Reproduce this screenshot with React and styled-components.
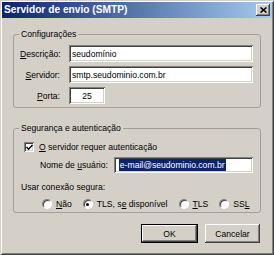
import React from "react";
import styled, { createGlobalStyle } from "styled-components";

const GlobalStyle = createGlobalStyle`
  html, body { margin: 0; padding: 0; background: #d4d0c8; }
  body { font-family: "Liberation Sans", Arial, sans-serif; font-size: 8.6px; color: #000; }
  * { box-sizing: border-box; }
`;

const Window = styled.div`
  width: 274px;
  height: 255px;
  background: #d4d0c8;
  padding: 2px;
  display: flex;
  flex-direction: column;
  box-shadow: inset 1px 1px 0 #d4d0c8, inset -1px -1px 0 #404040,
    inset 2px 2px 0 #ffffff, inset -2px -2px 0 #808080;
`;

const TitleBar = styled.div`
  height: 16px;
  display: flex;
  align-items: center;
  justify-content: space-between;
  padding: 0 2px 0 2px;
  background: linear-gradient(to right, #0a246a, #a6caf0);
`;

const Title = styled.span`
  color: #fff;
  font-weight: bold;
  font-size: 10.2px;
  line-height: 16px;
`;

const CloseButton = styled.div`
  width: 14px;
  height: 12px;
  background: #d4d0c8;
  display: flex;
  align-items: center;
  justify-content: center;
  box-shadow: inset -1px -1px 0 #404040, inset 1px 1px 0 #ffffff,
    inset -2px -2px 0 #808080;
`;

const Body = styled.div`
  display: flex;
  flex-direction: column;
  padding: 10px 11px 0 11px;
`;

const Group = styled.fieldset`
  margin: ${(p) => p.$mt || 0}px 0 0 0;
  padding: ${(p) => p.$pt}px 7px ${(p) => p.$pb}px 6px;
  border: 1px solid #a39f97;
  border-radius: 3px;
  min-width: 0;
  min-inline-size: 0;
`;

const Legend = styled.legend`
  padding: 0 2px;
  margin-left: -1px;
  line-height: 12px;
`;

const FieldGrid = styled.div`
  display: grid;
  grid-template-columns: 40px 1fr;
  column-gap: 9px;
  row-gap: 4px;
  align-items: center;
`;

const Label = styled.span`
  text-align: ${(p) => (p.$right ? "right" : "left")};
  white-space: nowrap;
  line-height: 12px;
`;

const Key = styled.span`
  text-decoration: underline;
  text-underline-offset: 1px;
`;

const TextBox = styled.div`
  height: ${(p) => p.$h || 17}px;
  width: ${(p) => (p.$w ? `${p.$w}px` : "auto")};
  flex: ${(p) => (p.$w ? "none" : "1")};
  justify-self: ${(p) => (p.$w ? "start" : "stretch")};
  background: #fff;
  display: flex;
  align-items: center;
  justify-content: ${(p) => (p.$center ? "center" : "flex-start")};
  padding: 0 3px;
  white-space: nowrap;
  overflow: hidden;
  box-shadow: inset 1px 1px 0 #808080, inset -1px -1px 0 #ffffff,
    inset 2px 2px 0 #404040, inset -2px -2px 0 #d4d0c8;
`;

const Selected = styled.span`
  background: #0a246a;
  color: #fff;
  line-height: 12px;
  padding: 0 1px;
  margin-left: 2px;
`;

const Stack = styled.div`
  display: flex;
  flex-direction: column;
`;

const Row = styled.div`
  display: flex;
  align-items: center;
  gap: ${(p) => p.$gap || 0}px;
  margin-left: ${(p) => p.$ml || 0}px;
  margin-top: ${(p) => p.$mt || 0}px;
  height: ${(p) => p.$h}px;
`;

const CheckBox = styled.div`
  width: 10px;
  height: 10px;
  background: #fff;
  display: flex;
  align-items: center;
  justify-content: center;
  box-shadow: inset 1px 1px 0 #808080, inset -1px -1px 0 #ffffff,
    inset 2px 2px 0 #404040, inset -2px -2px 0 #d4d0c8;
`;

const RadioItem = styled.div`
  display: flex;
  align-items: center;
  gap: 4px;
`;

const Radio = styled.div`
  width: 10px;
  height: 10px;
  border-radius: 50%;
  background: #fff;
  display: flex;
  align-items: center;
  justify-content: center;
  border: 1px solid;
  border-color: #808080 #ffffff #ffffff #808080;
  box-shadow: inset 1px 1px 0 #404040;

  &::after {
    content: "";
    display: ${(p) => (p.$checked ? "block" : "none")};
    width: 3px;
    height: 3px;
    border-radius: 50%;
    background: #000;
  }
`;

const ButtonRow = styled.div`
  display: flex;
  justify-content: flex-end;
  gap: 7px;
  margin-top: 11px;
  padding-right: 1px;
`;

const Button = styled.div`
  width: ${(p) => p.$w}px;
  height: 19px;
  display: flex;
  align-items: center;
  justify-content: center;
  background: #d4d0c8;
  border: ${(p) => (p.$default ? "1px solid #000" : "none")};
  box-shadow: inset -1px -1px 0 #404040, inset 1px 1px 0 #ffffff,
    inset -2px -2px 0 #808080;
`;

export default function App() {
  return (
    <>
      <GlobalStyle />
      <Window>
        <TitleBar>
          <Title>Servidor de envio (SMTP)</Title>
          <CloseButton>
            <svg width="7" height="6" viewBox="0 0 7 6">
              <path d="M0.5 0.5 L6.5 5.5 M6.5 0.5 L0.5 5.5" stroke="#000" strokeWidth="1.6" />
            </svg>
          </CloseButton>
        </TitleBar>
        <Body>
          <Group $pt={5} $pb={3}>
            <Legend>Configurações</Legend>
            <FieldGrid>
              <Label $right>
                <Key>D</Key>escrição:
              </Label>
              <TextBox>seudomínio</TextBox>
              <Label $right>
                <Key>S</Key>ervidor:
              </Label>
              <TextBox>smtp.seudominio.com.br</TextBox>
              <Label $right>
                <Key>P</Key>orta:
              </Label>
              <TextBox $w={36} $center>25</TextBox>
            </FieldGrid>
          </Group>

          <Group $mt={14} $pt={7} $pb={2}>
            <Legend>Segurança e autenticação</Legend>
            <Stack>
              <Row $ml={4} $gap={5} $h={12}>
                <CheckBox>
                  <svg width="7" height="7" viewBox="0 0 7 7">
                    <path d="M0.5 3 L2.5 5.2 L6.5 1" fill="none" stroke="#000" strokeWidth="1.5" />
                  </svg>
                </CheckBox>
                <Label>
                  <Key>O</Key> servidor requer autenticação
                </Label>
              </Row>
              <Row $ml={20} $gap={6} $h={16} $mt={4}>
                <Label>
                  Nome de <Key>u</Key>suário:
                </Label>
                <TextBox $h={16}>
                  <Selected>e-mail@seudominio.com.br</Selected>
                </TextBox>
              </Row>
              <Row $ml={1} $h={12} $mt={8}>
                <Label>Usar conexão segura:</Label>
              </Row>
              <Row $ml={22} $gap={11} $h={12} $mt={5}>
                <RadioItem>
                  <Radio />
                  <Label>
                    <Key>N</Key>ão
                  </Label>
                </RadioItem>
                <RadioItem>
                  <Radio $checked />
                  <Label>
                    TLS, s<Key>e</Key> disponível
                  </Label>
                </RadioItem>
                <RadioItem>
                  <Radio />
                  <Label>
                    <Key>T</Key>LS
                  </Label>
                </RadioItem>
                <RadioItem>
                  <Radio />
                  <Label>
                    SS<Key>L</Key>
                  </Label>
                </RadioItem>
              </Row>
            </Stack>
          </Group>

          <ButtonRow>
            <Button $w={57} $default>
              OK
            </Button>
            <Button $w={55}>Cancelar</Button>
          </ButtonRow>
        </Body>
      </Window>
    </>
  );
}
